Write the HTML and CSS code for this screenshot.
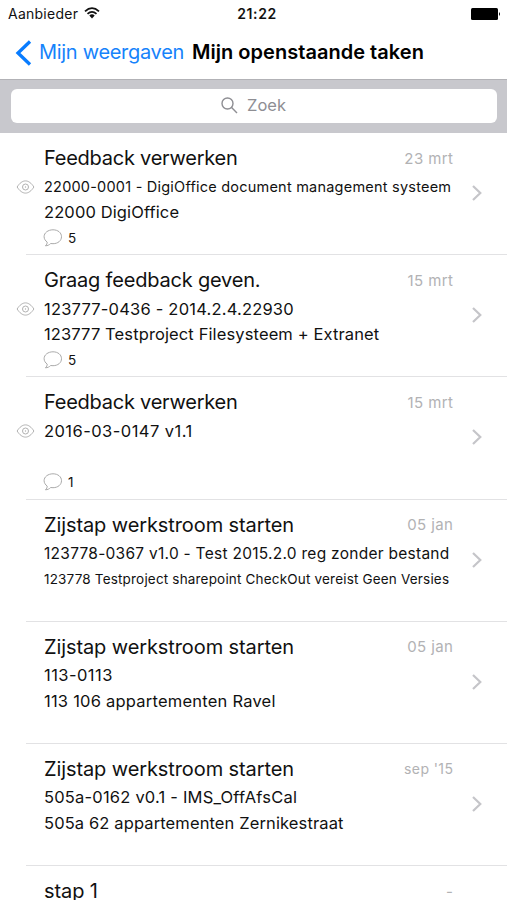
FILE: index.html
```html
<!DOCTYPE html>
<html lang="nl">
<head>
<meta charset="utf-8">
<title>Mijn openstaande taken</title>
<link rel="stylesheet" href="styles.css">
</head>
<body>
<svg class="defs" width="0" height="0" aria-hidden="true">
  <symbol id="eye" viewBox="0 0 18 14"><path d="M.6 7C3.200 3 6 .9 9 .9S14.800 3 17.400 7C14.800 11 12 13.100 9 13.100S3.200 11 .6 7Z"/><circle cx="9" cy="7" r="3"/><circle cx="9" cy="7" r=".3"/></symbol>
  <symbol id="bubble" viewBox="0 0 20 18"><path d="M10 .8c5 0 8.500 3 8.500 6.900s-3.500 7-8.500 7c-.8 0-1.600-.1-2.300-.2-1.300 1.400-3 2.200-5.300 2.300 1.200-1 1.800-2.200 1.800-3.700C2.400 11.800 1.100 9.900 1.100 7.700 1.100 3.800 5 .8 10 .8Z"/></symbol>
  <symbol id="chevron" viewBox="0 0 12 18"><path d="M2 2 9.300 9 2 16"/></symbol>
</svg>
<header>
  <div class="status">
    <span class="carrier">Aanbieder</span>
    <svg class="wifi" viewBox="0 0 16 12"><path d="M1 4.300Q8-2.100 15 4.300M3.500 6.900Q8 2.900 12.500 6.900"/><path class="dot" d="M5.300 8.400Q8 6.300 10.700 8.400L8 11.400Z"/></svg>
    <span class="clock">21:22</span>
    <svg class="battery" viewBox="0 0 30 12"><rect width="27" height="12" rx="1.500"/><path d="M28 4q2 2 0 4Z"/></svg>
  </div>
  <nav>
    <svg class="back" viewBox="0 0 17 26"><path d="M15 1.500 3 13 15 24.500"/></svg>
    <a class="parent">Mijn weergaven</a>
    <h1>Mijn openstaande taken</h1>
  </nav>
</header>
<div class="search"><div class="field">
  <svg class="glass" viewBox="0 0 17 17"><circle cx="6.500" cy="6.500" r="5.500"/><path d="m10.600 10.600 5.400 5.400"/></svg>
  <span class="hint">Zoek</span>
</div></div>
<main>
  <article class="feedback">
    <h2>Feedback verwerken</h2><time>23 mrt</time>
    <svg class="eye"><use href="#eye"/></svg><p class="code small">22000-0001 - DigiOffice document management systeem</p>
    <p class="project">22000 DigiOffice</p>
    <div class="comments"><svg><use href="#bubble"/></svg><span>5</span></div>
    <svg class="chevron"><use href="#chevron"/></svg>
  </article>
  <article class="feedback">
    <h2 class="request">Graag feedback geven.</h2><time>15 mrt</time>
    <svg class="eye"><use href="#eye"/></svg><p class="code">123777-0436 - 2014.2.4.22930</p>
    <p class="project">123777 Testproject Filesysteem + Extranet</p>
    <div class="comments"><svg><use href="#bubble"/></svg><span>5</span></div>
    <svg class="chevron"><use href="#chevron"/></svg>
  </article>
  <article class="feedback">
    <h2>Feedback verwerken</h2><time>15 mrt</time>
    <svg class="eye"><use href="#eye"/></svg><p class="code wide">2016-03-0147 v1.1</p>
    <div class="comments"><svg><use href="#bubble"/></svg><span>1</span></div>
    <svg class="chevron"><use href="#chevron"/></svg>
  </article>
  <article>
    <h2>Zijstap werkstroom starten</h2><time>05 jan</time>
    <p class="code medium">123778-0367 v1.0 - Test 2015.2.0 reg zonder bestand</p>
    <p class="project tiny">123778 Testproject sharepoint CheckOut vereist Geen Versies</p>
    <svg class="chevron"><use href="#chevron"/></svg>
  </article>
  <article>
    <h2>Zijstap werkstroom starten</h2><time>05 jan</time>
    <p class="code wide">113-0113</p>
    <p class="project loose">113 106 appartementen Ravel</p>
    <svg class="chevron"><use href="#chevron"/></svg>
  </article>
  <article>
    <h2>Zijstap werkstroom starten</h2><time class="year">sep '15</time>
    <p class="code">505a-0162 v0.1 - IMS_OffAfsCal</p>
    <p class="project">505a 62 appartementen Zernikestraat</p>
    <svg class="chevron"><use href="#chevron"/></svg>
  </article>
  <article>
    <h2>stap 1</h2><time>-</time>
  </article>
</main>
</body>
</html>
```
FILE: styles.css
```css
* { box-sizing: border-box; margin: 0; padding: 0; }
html, body { height: 900px; overflow: hidden; }
body { font-family: Inter, "Liberation Sans", sans-serif; background: #fff; color: #111; display: flex; flex-direction: column; }
svg { fill: none; display: block; flex: none; }
.defs { position: absolute; }
header { height: 79px; flex: none; }
.status { height: 27px; display: grid; grid-template-columns: 76px 1fr auto 1fr 28px; align-items: center; padding: 0 8px; font-size: 14px; white-space: nowrap; }
.carrier { letter-spacing: .25px; }
.wifi { width: 16px; height: 12px; stroke: #111; stroke-width: 1.8; margin-top: -1px; }
.wifi .dot { fill: #111; stroke: none; }
.clock { font-weight: 600; letter-spacing: .6px; grid-column: 3; margin-right: 41px; }
.battery { width: 30px; height: 12px; fill: #000; grid-column: 5; }
nav { height: 50px; display: flex; align-items: center; padding-left: 15px; font-size: 20px; white-space: nowrap; }
.back { width: 17px; height: 26px; stroke: #087cff; stroke-width: 3.3; margin-top: 1px; }
.parent { color: #1683fb; margin-left: 7px; width: 153px; letter-spacing: -.3px; }
h1 { font-size: 20px; font-weight: 600; color: #000; letter-spacing: .03px; }
.search { height: 54px; flex: none; background: #c8c8cd; border-top: 1px solid #b2b2b6; padding: 9px 10px 10px 11px; }
.field { height: 34px; background: #fff; border-radius: 6px; display: flex; align-items: center; padding: 0 0 1px 210px; gap: 9px; color: #8e8e93; font-size: 16.5px; }
.hint { margin-top: -1px; }
.glass { width: 17px; height: 17px; stroke: #8e8e93; stroke-width: 1.4; }
main { flex: 1; min-height: 0; overflow: hidden; }
article { position: relative; height: 122.2px; display: grid; grid-template-columns: 28px 1fr auto 16px 38px; grid-template-rows: 29px 27px 25px 26px; padding-top: 11px; padding-left: 16px; align-items: center; white-space: nowrap; }
article::after { content: ""; position: absolute; left: 26px; right: 0; bottom: 0; height: 1px; background: #e2e2e4; }
article:last-child { height: 34px; grid-template-rows: 29px; }
article:last-child::after { display: none; }
h2 { grid-area: 1 / 2; font-size: 20px; line-height: 24px; font-weight: 400; letter-spacing: -.1px; margin-top: -1px; }
.feedback h2 { letter-spacing: -.25px; margin-top: -2px; }
.feedback .request { letter-spacing: -.2px; }
time { grid-area: 1 / 3; font-size: 15px; color: #b2b2b4; letter-spacing: .4px; margin: -1px -.3px 0 0; }
.year { font-size: 14px; }
.eye { grid-area: 2 / 1; width: 19px; height: 14px; stroke: #a8a8a8; stroke-width: .9; }
.code { grid-area: 2 / 2 / 3 / 4; font-size: 16.5px; letter-spacing: .2px; }
.project { grid-area: 3 / 2 / 4 / 4; font-size: 16.5px; letter-spacing: .12px; margin-top: -1px; }
.loose { letter-spacing: .22px; }
.wide { letter-spacing: .45px; }
.small { font-size: 14.5px; letter-spacing: .22px; }
.medium { font-size: 15.5px; letter-spacing: .27px; }
.tiny { font-size: 13.5px; letter-spacing: .18px; }
.comments { grid-area: 4 / 2; display: flex; align-items: center; gap: 5px; margin: -1px 0 0 -1px; font-size: 13.5px; }
.comments svg { width: 20px; height: 18px; stroke: #aaa; stroke-width: 1; }
.chevron { grid-area: 1 / 5 / 5 / 6; align-self: start; margin-top: 40px; margin-left: 2px; width: 12px; height: 18px; stroke: #c5c5c9; stroke-width: 2.2; }
```
